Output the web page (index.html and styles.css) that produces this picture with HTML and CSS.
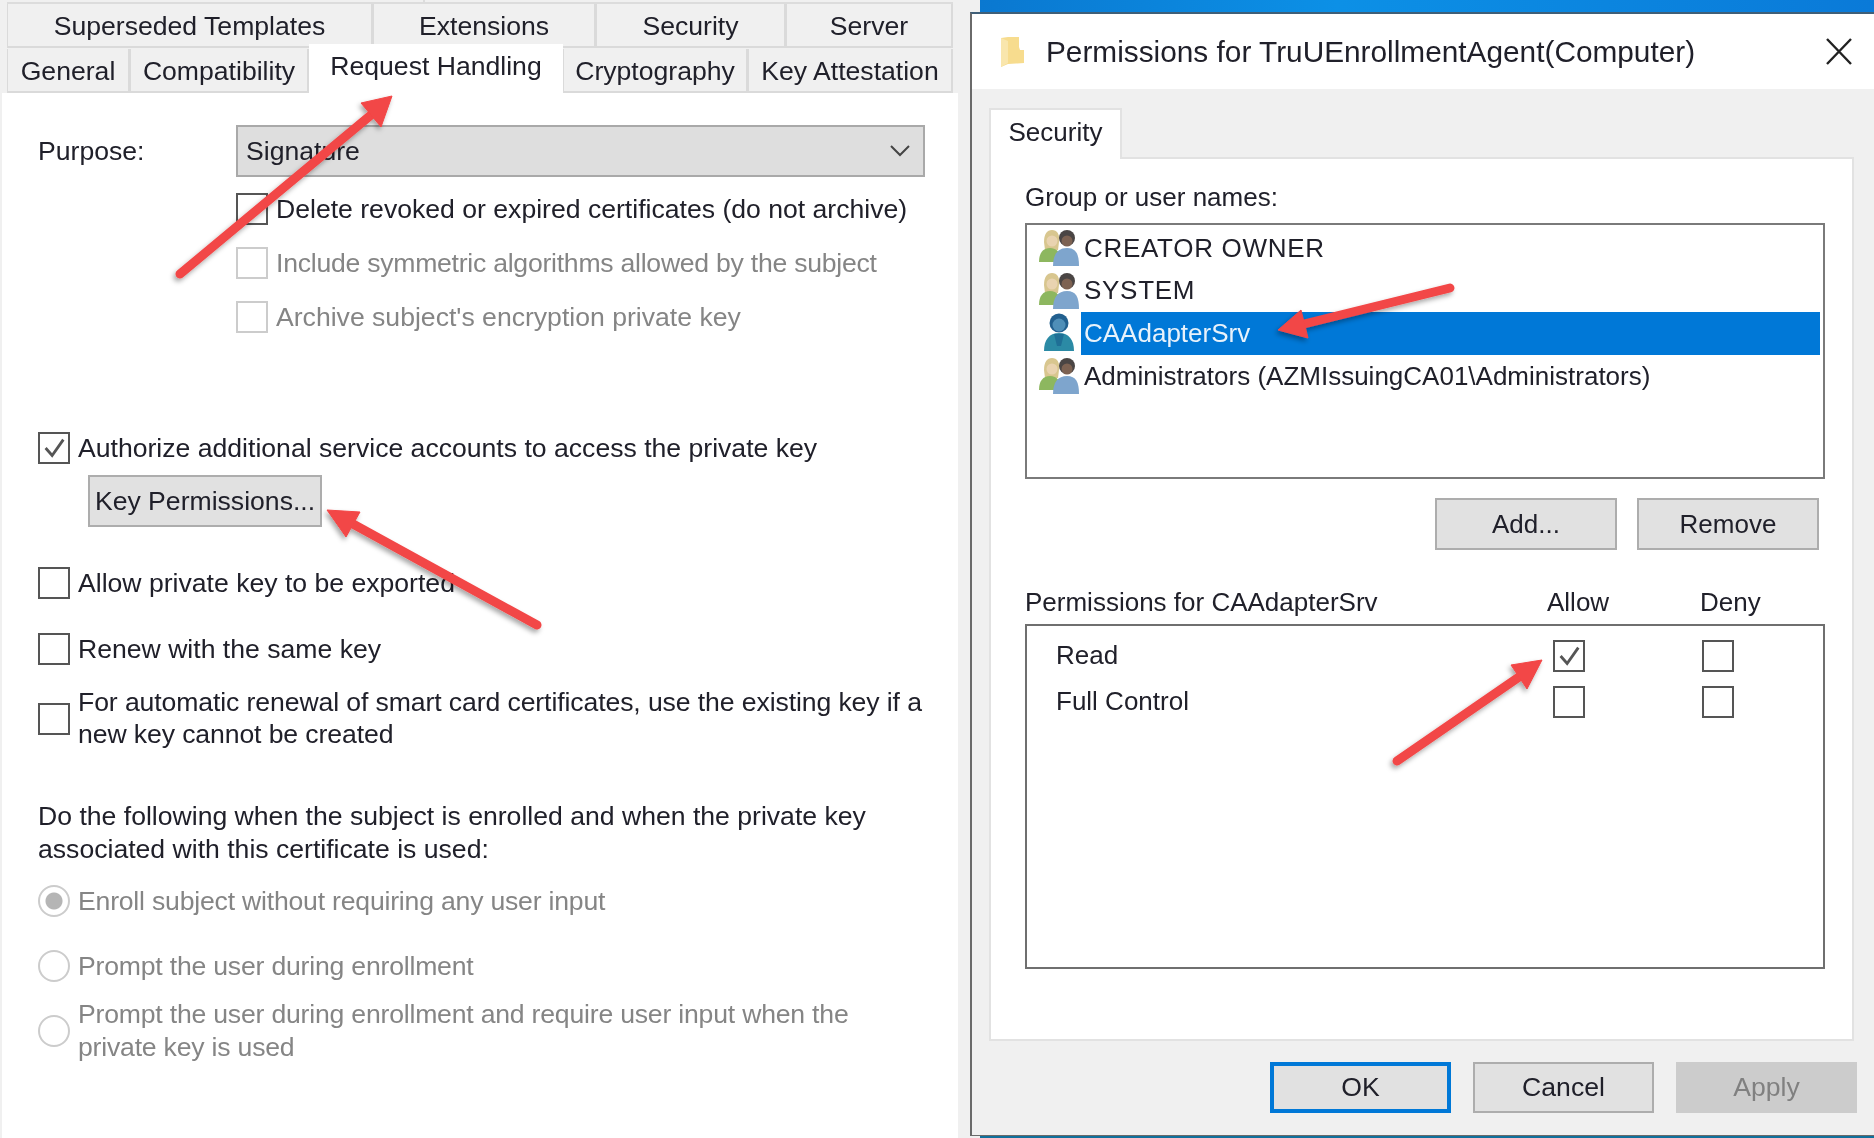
FILE: index.html
```html
<!DOCTYPE html>
<html lang="en">
<head>
<meta charset="UTF-8">
<meta name="viewport" content="width=device-width, initial-scale=1.0">
<title>Key Permissions</title>
<link rel="stylesheet" href="styles.css">
</head>
<body>
<div class="screen">
    <svg width="0" height="0" class="defs">
        <defs>
            <symbol id="group" viewBox="0 0 40 40">
                <path d="M5 14c0-8 3-12 8-12s8 4 7 12l-1 8H6z" fill="#d8c68f"/>
                <circle cx="13" cy="13" r="5.5" fill="#e9d3b0"/>
                <path d="M0 34c0-9 4-14 11-14s11 5 11 14z" fill="#8db75f"/>
                <circle cx="28" cy="10" r="8" fill="#4a4544"/>
                <circle cx="28" cy="13" r="5.5" fill="#7d6252"/>
                <path d="M14 38c0-12 5-18 14-18s12 6 12 18z" fill="#7ea5cd"/>
            </symbol>
            <symbol id="user" viewBox="0 0 34 40">
                <circle cx="17" cy="10" r="9.5" fill="#22608f"/>
                <circle cx="17" cy="12" r="6.5" fill="#4f8fb8"/>
                <path d="M2 38c0-11 5-18 15-18s15 7 15 18z" fill="#2b8aa5"/>
                <path d="M12 21h10l-3 12h-4z" fill="#1f6f96"/>
            </symbol>
        </defs>
    </svg>

    <div class="props">
        <div class="tabs-strip">
            <div class="strip-cell strip-a"></div>
            <div class="strip-cell strip-b"></div>
        </div>
        <div class="tabs tabs-back">
            <div class="tab w-super">Superseded Templates</div>
            <div class="tab w-ext">Extensions</div>
            <div class="tab w-sec">Security</div>
            <div class="tab w-srv">Server</div>
        </div>
        <div class="tabs tabs-front">
            <div class="tab w-gen">General</div>
            <div class="tab w-comp">Compatibility</div>
            <div class="tab tab-active w-req">Request Handling</div>
            <div class="tab w-cry">Cryptography</div>
            <div class="tab w-key">Key Attestation</div>
        </div>

        <div class="props-body">
            <div class="purpose">
                <span class="purpose-label">Purpose:</span>
                <div class="select">
                    <span>Signature</span>
                    <svg class="chevron" width="20" height="12" viewBox="0 0 20 12"><path d="M1 1l9 9 9-9" fill="none" stroke="#444" stroke-width="2"/></svg>
                </div>
            </div>

            <div class="sub-options">
                <label class="check"><i class="box"></i>Delete revoked or expired certificates (do not archive)</label>
                <label class="check off tight"><i class="box"></i>Include symmetric algorithms allowed by the subject</label>
                <label class="check off"><i class="box"></i>Archive subject's encryption private key</label>
            </div>

            <label class="check authorize"><i class="box"><svg viewBox="0 0 30 30"><path d="M6 15l7 8L25 6" fill="none" stroke="#555" stroke-width="3"/></svg></i>Authorize additional service accounts to access the private key</label>
            <div class="btn key-btn">Key Permissions...</div>
            <label class="check allow-export"><i class="box"></i>Allow private key to be exported</label>
            <label class="check renew"><i class="box"></i>Renew with the same key</label>
            <label class="check auto-renew"><i class="box"></i><span>For automatic renewal of smart card certificates, use the existing key if a<br>new key cannot be created</span></label>

            <p class="enroll-note">Do the following when the subject is enrolled and when the private key<br>associated with this certificate is used:</p>

            <label class="radio off picked"><i class="dot"></i>Enroll subject without requiring any user input</label>
            <label class="radio off second"><i class="dot"></i>Prompt the user during enrollment</label>
            <label class="radio off third"><i class="dot"></i><span>Prompt the user during enrollment and require user input when the<br>private key is used</span></label>
        </div>
    </div>

    <div class="side">
        <div class="desktop-strip"></div>
        <div class="dialog">
            <div class="titlebar">
                <svg class="folder" width="24" height="33" viewBox="0 0 24 33"><path d="M0 3l7-1h11v10l1 3h4v13l-16 1-7 3z" fill="#f7dc8e"/><path d="M0 3l7 3v22l-7 4z" fill="#f9e6ad"/></svg>
                <span class="title">Permissions for TruUEnrollmentAgent(Computer)</span>
                <svg class="close" width="28" height="27" viewBox="0 0 28 27"><path d="M2 1l24 25M26 1L2 26" fill="none" stroke="#222" stroke-width="2.4"/></svg>
            </div>
            <div class="dialog-content">
                <div class="tab-one">Security</div>
                <div class="sec-panel">
                    <div class="group-label">Group or user names:</div>
                    <div class="names">
                        <div class="name"><svg class="ico"><use href="#group"/></svg><span class="wide">CREATOR OWNER</span></div>
                        <div class="name"><svg class="ico"><use href="#group"/></svg><span class="wide">SYSTEM</span></div>
                        <div class="name name-sel"><svg class="ico ico-user"><use href="#user"/></svg><span>CAAdapterSrv</span></div>
                        <div class="name"><svg class="ico"><use href="#group"/></svg><span>Administrators (AZMIssuingCA01\Administrators)</span></div>
                    </div>
                    <div class="list-btns">
                        <div class="btn w-182">Add...</div>
                        <div class="btn w-182">Remove</div>
                    </div>
                    <div class="perm-head">
                        <span class="head-name">Permissions for CAAdapterSrv</span>
                        <span class="head-allow">Allow</span>
                        <span>Deny</span>
                    </div>
                    <div class="perms">
                        <div class="perm-row">
                            <span class="perm-name">Read</span>
                            <i class="box col-allow"><svg viewBox="0 0 30 30"><path d="M6 15l7 8L25 6" fill="none" stroke="#555" stroke-width="3"/></svg></i>
                            <i class="box"></i>
                        </div>
                        <div class="perm-row">
                            <span class="perm-name">Full Control</span>
                            <i class="box col-allow"></i>
                            <i class="box"></i>
                        </div>
                    </div>
                </div>
                <div class="dialog-btns">
                    <div class="btn btn-default">OK</div>
                    <div class="btn">Cancel</div>
                    <div class="btn btn-off">Apply</div>
                </div>
            </div>
        </div>
        <div class="bottom-strip"></div>
    </div>

    <!-- red callout arrows sit on top of everything -->
    <svg class="arrows" width="1874" height="1138" viewBox="0 0 1874 1138">
        <defs>
            <filter id="soft" x="-20%" y="-20%" width="140%" height="140%">
                <feDropShadow dx="-2" dy="3" stdDeviation="2.5" flood-color="#000" flood-opacity="0.35"/>
            </filter>
        </defs>
        <g fill="#f24646" stroke="#f24646" filter="url(#soft)">
            <path d="M180 274L371 115" fill="none" stroke-width="9" stroke-linecap="round"/>
            <path d="M392 96L361 103L381 127Z" stroke-width="1"/>
            <path d="M537 625L353 524" fill="none" stroke-width="9" stroke-linecap="round"/>
            <path d="M327 510L360 512L346 537Z" stroke-width="1"/>
            <path d="M1450 288L1304 324" fill="none" stroke-width="9" stroke-linecap="round"/>
            <path d="M1278 330L1301 310L1308 338Z" stroke-width="1"/>
            <path d="M1397 761L1519 677" fill="none" stroke-width="9" stroke-linecap="round"/>
            <path d="M1542 660L1511 665L1527 689Z" stroke-width="1"/>
        </g>
    </svg>
</div>
</body>
</html>
```

FILE: styles.css
```css
html, body {
    margin: 0;
    height: 100%;
}

body {
    background: #fff;
    font-family: "Liberation Sans", Arial, sans-serif;
    font-size: 26.6px;
    color: #20202a;
    overflow: hidden;
}

.screen {
    display: flex;
    width: 1874px;
    height: 1138px;
    position: relative;
    background: #f0f0f0;
    filter: blur(0.6px);
    white-space: nowrap;
}

.defs {
    position: absolute;
}

i {
    font-style: normal;
}

/* left window */
.props {
    width: 958px;
    padding-left: 7px;
    box-sizing: border-box;
    background: #f0f0f0;
}

.tabs-strip {
    display: flex;
    height: 4px;
}

.strip-cell {
    box-sizing: border-box;
    border-bottom: 2px solid #dcdcdc;
}

.strip-a {
    width: 418px;
    border-right: 2px solid #dcdcdc;
}

.strip-b {
    width: 528px;
}

.tabs {
    display: flex;
    height: 44px;
    align-items: stretch;
}

.tabs-front {
    margin-top: 1px;
}

.tab {
    box-sizing: border-box;
    display: flex;
    align-items: center;
    justify-content: center;
    padding-top: 2px;
    background: #f0f0f0;
    border-right: 2px solid #dadada;
    border-left: 1px solid #dadada;
    border-bottom: 2px solid #dadada;
}

.w-super { width: 366px; }
.w-ext { width: 223px; }
.w-sec { width: 190px; }
.w-srv { width: 167px; }
.w-gen { width: 123px; }
.w-comp { width: 179px; }
.w-req { width: 254px; }
.w-cry { width: 185px; }
.w-key { width: 205px; }

.tab-active {
    background: #fff;
    height: 50px;
    margin-top: -5px;
    border: 0;
    padding: 0 0 5px;
    position: relative;
}

.props-body {
    background: #fff;
    height: 1045px;
    width: 956px;
    margin-left: -5px;
    padding: 32px 0 0 36px;
    box-sizing: border-box;
}

.purpose {
    display: flex;
    align-items: center;
    height: 52px;
}

.purpose-label {
    width: 198px;
}

.select {
    width: 689px;
    height: 52px;
    box-sizing: border-box;
    background: #dedede;
    border: 2px solid #a9a9a9;
    display: flex;
    align-items: center;
    justify-content: space-between;
    padding: 0 13px 0 8px;
}

.sub-options {
    margin: 16px 0 0 198px;
    display: flex;
    flex-direction: column;
    gap: 22px;
}

.check, .radio {
    display: flex;
    align-items: center;
    height: 32px;
}

.box {
    display: block;
    width: 32px;
    height: 32px;
    box-sizing: border-box;
    border: 2px solid #555;
    margin-right: 8px;
    flex: none;
    background: #fff;
}

.box svg {
    display: block;
    width: 100%;
    height: 100%;
}

.off {
    color: #858585;
}

.off .box {
    border-color: #ccc;
}

.tight {
    letter-spacing: -0.25px;
}

.authorize {
    margin-top: 99px;
}

.btn {
    box-sizing: border-box;
    display: flex;
    align-items: center;
    justify-content: center;
    height: 52px;
    background: #e1e1e1;
    border: 2px solid #adadad;
}

.key-btn {
    width: 234px;
    margin: 11px 0 0 50px;
}

.allow-export {
    margin-top: 40px;
}

.renew {
    margin-top: 34px;
}

.auto-renew {
    margin-top: 22px;
    height: 64px;
    line-height: 32px;
    letter-spacing: -0.1px;
}

.auto-renew span {
    margin-top: -2px;
}

.enroll-note {
    margin: 49px 0 0;
    line-height: 33px;
}

.dot {
    display: block;
    width: 32px;
    height: 32px;
    box-sizing: border-box;
    border: 2px solid #ccc;
    border-radius: 50%;
    margin-right: 8px;
    flex: none;
}

.picked .dot {
    background: radial-gradient(circle, #b5b5b5 0 8px, #fff 9px);
}

.radio {
    letter-spacing: -0.2px;
}

.radio.picked {
    margin-top: 19px;
}

.radio.second {
    margin-top: 33px;
}

.radio.third {
    margin-top: 16px;
    height: 66px;
    line-height: 33px;
}

/* right side */
.side {
    margin-left: 12px;
    flex: 1;
    display: flex;
    flex-direction: column;
    font-size: 26px;
}

.desktop-strip {
    height: 12px;
    margin-left: 10px;
    background: linear-gradient(90deg, #0a78d0, #0c90e6 40%, #0a7ad8);
}

.bottom-strip {
    height: 2px;
    margin-left: 10px;
    background: #10709c;
}

.dialog {
    height: 1124px;
    box-sizing: border-box;
    border-top: 2px solid #3f5f78;
    border-left: 2px solid #6a6a6a;
    border-bottom: 1px solid #6a6a6a;
    background: #f0f0f0;
}

.titlebar {
    height: 75px;
    background: #fff;
    display: flex;
    align-items: center;
    box-sizing: border-box;
    padding: 0 21px 0 29px;
}

.title {
    flex: 1;
    margin-left: 21px;
    font-size: 29.8px;
}

.dialog-content {
    padding: 19px 20px 0 17px;
}

.tab-one {
    width: 133px;
    height: 51px;
    box-sizing: border-box;
    padding-bottom: 4px;
    background: #fff;
    border: 2px solid #e2e2e2;
    border-bottom: 0;
    display: flex;
    align-items: center;
    justify-content: center;
    position: relative;
    margin-bottom: -2px;
    z-index: 1;
}

.sec-panel {
    height: 884px;
    box-sizing: border-box;
    background: #fff;
    border: 2px solid #e2e2e2;
    padding: 21px 0 0 34px;
}

.group-label {
    height: 34px;
    line-height: 34px;
}

.names {
    width: 800px;
    height: 256px;
    box-sizing: border-box;
    border: 2px solid #7a7a7a;
    margin-top: 9px;
    padding: 2px 3px;
}

.name {
    display: flex;
    align-items: center;
    height: 42.6px;
}

.wide {
    letter-spacing: 0.7px;
}

.ico {
    width: 40px;
    height: 40px;
    margin-left: 9px;
    flex: none;
}

.name span {
    flex: 1;
    margin-left: 2px;
    padding-left: 3px;
    height: 100%;
    display: flex;
    align-items: center;
}

.name-sel span {
    background: #0078d7;
    color: #e8f2fb;
}

.list-btns {
    display: flex;
    gap: 20px;
    margin: 19px 0 0 410px;
}

.w-182 {
    width: 182px;
}

.perm-head {
    display: flex;
    margin-top: 30px;
    height: 44px;
    align-items: center;
}

.head-name {
    width: 522px;
}

.head-allow {
    width: 153px;
}

.perms {
    width: 800px;
    height: 345px;
    box-sizing: border-box;
    border: 2px solid #6f6f6f;
    padding-top: 13px;
}

.perm-row {
    display: flex;
    align-items: center;
    height: 33px;
    margin-bottom: 13px;
}

.perm-name {
    width: 497px;
    margin-left: 29px;
}

.col-allow {
    margin-right: 117px;
}

.dialog-btns {
    display: flex;
    justify-content: flex-end;
    gap: 22px;
    margin: 21px -3px 0 0;
    font-size: 26.6px;
}

.dialog-btns .btn {
    height: 51px;
    width: 181px;
}

.dialog-btns .btn-default {
    border: 4px solid #0078d7;
}

.dialog-btns .btn-off {
    background: #ccc;
    border-color: #ccc;
    color: #808080;
}

.arrows {
    position: absolute;
    left: 0;
    top: 0;
}
```
